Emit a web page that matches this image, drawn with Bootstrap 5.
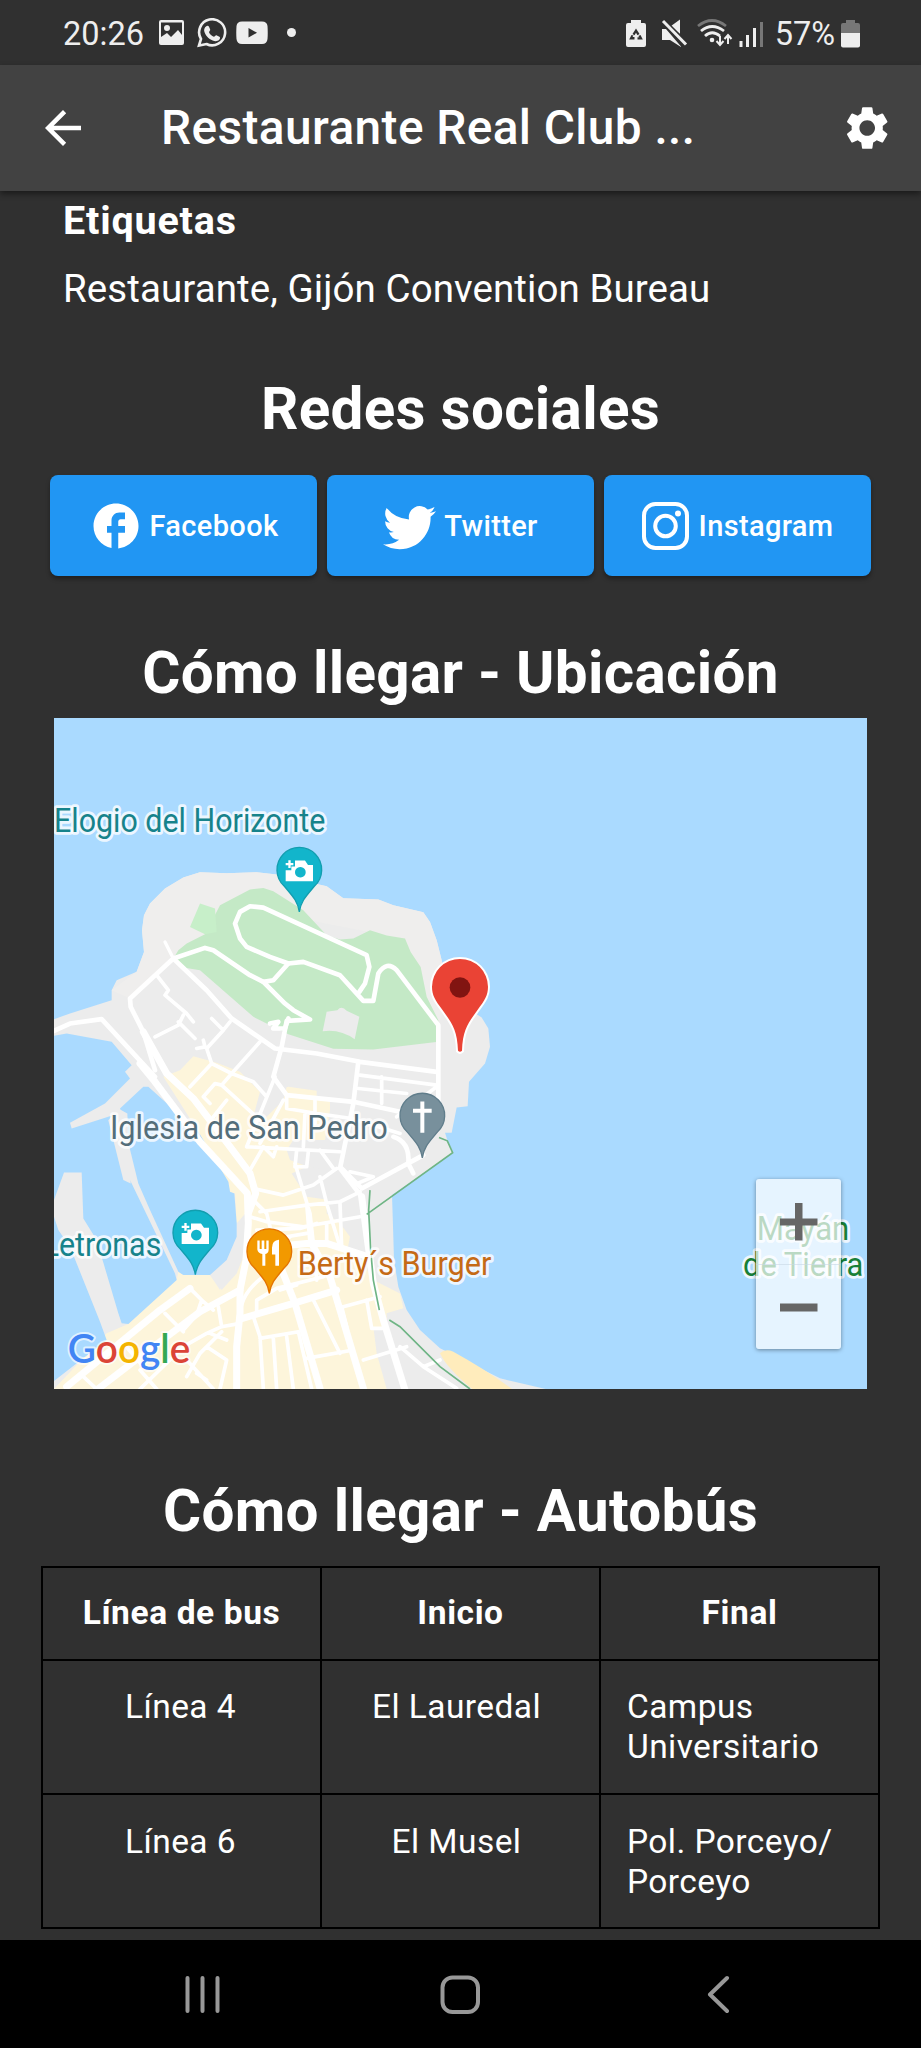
<!DOCTYPE html>
<html lang="es">
<head>
<meta charset="utf-8">
<meta name="viewport" content="width=device-width, initial-scale=1">
<title>Restaurante Real Club</title>
<link href="https://cdn.jsdelivr.net/npm/bootstrap@5.3.0/dist/css/bootstrap.min.css" rel="stylesheet">
<style>
body{background:#303030;color:#fff;font-family:Roboto,"Liberation Sans",sans-serif;height:2048px;overflow:hidden;font-size:33.5px;line-height:40px}
svg{display:block;flex:none}
.statusbar{height:65px;padding:3px 61px 0 63px;color:#eee;font-size:32.5px;line-height:62px}
.appbar{height:126px;background:#424242;padding:0 28px 0 36px;box-shadow:0 3px 6px rgba(0,0,0,.45);position:relative;z-index:1}
.appbar h1{font-size:47.8px;font-weight:500;line-height:56px;margin:-1px 0 0 71px;letter-spacing:.4px}
.tags{padding:7px 63px 0;height:184px}
.tags h2{font-size:39.5px;line-height:46px;font-weight:700;margin:0 0 22px;letter-spacing:.8px}
.tags p{font-size:38.5px;line-height:46px;margin:0;letter-spacing:.08px}
.heading{font-size:58.4px;line-height:68px;font-weight:700;text-align:center;margin:0;letter-spacing:.3px}
.socials{padding:32px 50px 63px;gap:10px}
.btn-social{flex:1 1 0;background:#2196f3!important;color:#fff!important;height:101px;border:0;border-radius:8px;font-size:29px;line-height:40px;font-weight:500;letter-spacing:.35px;box-shadow:0 3px 4px rgba(0,0,0,.35);padding:0}
.mapbox{width:813px;height:671px;margin:11px auto 88px 54px;position:relative;overflow:hidden;background:#aadaff}
.zoomer{right:26px;bottom:40px;width:85px;height:170px;border-radius:3px;background:rgba(255,255,255,.7);box-shadow:0 1px 4px rgba(0,0,0,.4)}
.zoomer button{height:85px;border:0;background:none;padding:0}
.zoomer button+button{border-top:1px solid rgba(200,215,228,.6)}
.buses{width:839px;margin:21px 0 0 41px;color:#fff;border-collapse:collapse;table-layout:fixed}
.buses th,.buses td{border:2px solid #000;padding:26px 26px;text-align:center;vertical-align:top;font-size:33.5px;line-height:40px;letter-spacing:.42px}
.buses th{padding:25px 26px 26px;letter-spacing:.6px}
.buses tr:last-child td{padding-top:27px;padding-bottom:25px}
.buses td:first-child{padding-right:28px}
.buses td:nth-child(2){padding-right:34px}
.buses td:last-child{text-align:left;padding-right:10px}
.sysnav{height:108px;background:#000;position:fixed;left:0;right:0;bottom:0;color:#989898}
</style>
</head>
<body>
<div class="statusbar d-flex align-items-center">
  <span>20:26</span>
  <svg width="145" height="32" viewBox="0 0 145 32" style="margin-left:14px" fill="#eee">
    <path fill-rule="evenodd" d="M3 2H24a2 2 0 0 1 2 2V25a2 2 0 0 1-2 2H3a2 2 0 0 1-2-2V4a2 2 0 0 1 2-2zM3 4.500V19L9 15L13 19L20 12L24 17V4.500zM9 7a3 3 0 1 1 0 6a3 3 0 0 1 0-6z"/>
    <path d="M41 27.500L43 21A13 13 0 1 1 48.500 26z" fill="none" stroke="#eee" stroke-width="2.600"/>
    <path d="M48 8.500c1-1.200 2.500-1 3 .2l1.200 2.800c.3.800-1.400 2.200-1.100 2.900 1 2 2.600 3.400 4.700 4.300.8.300 1.700-1.700 2.600-1.400l3 1.500c1 .6.700 2-.2 3-1.600 1.700-4 1.800-6.500.8-4-1.600-7.600-5.200-8.500-9.500-.3-1.900.5-3.600 1.800-4.600z"/>
    <path fill-rule="evenodd" d="M84 3.500H104Q109 3.500 109.500 8Q110 15 109.500 21Q109 26 104 26H84Q79 26 78.500 21Q78 15 78.500 8Q79 3.500 84 3.500zM90.500 10V19.500L99 14.700z"/>
    <circle cx="133.500" cy="14.500" r="4.500"/>
  </svg>
  <svg class="ms-auto" width="138" height="30" viewBox="0 0 138 30" fill="#eee" style="margin-right:11px">
    <path fill-rule="evenodd" d="M5 1H15V4H18Q20 4 20 6V26Q20 28 18 28H2Q0 28 0 26V6Q0 4 2 4H5zM10 9.500L6.500 15L8.500 16.300L10 13.800L11.500 16.300L13.500 15zM5.500 16L3.200 20.500H8.500V18H6.500L7.500 16.500zM14.500 16L12.300 17L13.300 18.300H11.500V20.500H16.800z"/>
    <path d="M36 10H40L55 27.500V28L44 21H36zM45 7L54 .5V15z"/>
    <path d="M37 2L60 25.500" stroke="#303030" stroke-width="6"/><path d="M37 2L60 25.500" stroke="#eee" stroke-width="3"/>
    <g fill="none" stroke-width="2.800"><path d="M72 7Q86-4 100 7" stroke="#777"/><path d="M75 12Q86 3 98 12M79 17Q86 10.500 94 17" stroke="#eee"/></g>
    <circle cx="86" cy="21" r="2.300"/>
    <path d="M94 17V26M90.500 22L94 26L97.500 22M102 25V16M98.500 20L102 16L105.500 20" fill="none" stroke="#eee" stroke-width="2"/>
    <path d="M113.500 22h3v6h-3zM120 16h3v12h-3zM127 9h3v19h-3z"/><path d="M134 3h3v25h-3z" fill="#777"/>
  </svg>
  <span>57%</span>
  <svg width="19" height="28" viewBox="0 0 19 28" style="margin-left:6px"><path fill="#777" d="M5 0H14V3H17Q19 3 19 5V13H0V5Q0 3 2 3H5z"/><path fill="#eee" d="M0 13H19V25.500Q19 27.500 17 27.500H2Q0 27.500 0 25.500z"/></svg>
</div>
<header class="appbar d-flex align-items-center">
  <svg width="54" height="54" viewBox="0 0 24 24" fill="#fff"><path d="M20 11H7.830l5.590-5.590L12 4l-8 8 8 8 1.410-1.410L7.830 13H20v-2z"/></svg>
  <h1>Restaurante Real Club ...</h1>
  <svg class="ms-auto" width="52" height="52" viewBox="0 0 24 24" fill="#fff"><path transform="translate(.1)" d="M19.140,12.940c0.040-0.300,0.060-0.610,0.060-0.940c0-0.320-0.020-0.640-0.070-0.940l2.030-1.580c0.180-0.140,0.230-0.410,0.120-0.610l-1.920-3.320c-0.120-0.220-0.370-0.290-0.590-0.220l-2.390,0.960c-0.500-0.380-1.030-0.700-1.620-0.940L14.400,2.810c-0.040-0.240-0.240-0.410-0.480-0.410h-3.840c-0.240,0-0.430,0.170-0.470,0.410L9.250,5.350C8.660,5.590,8.120,5.920,7.630,6.290L5.240,5.330c-0.220-0.080-0.470,0-0.590,0.220L2.740,8.870C2.620,9.080,2.660,9.340,2.860,9.480l2.030,1.580C4.840,11.360,4.800,11.690,4.800,12s0.020,0.640,0.070,0.940l-2.030,1.580c-0.180,0.140-0.230,0.410-0.120,0.610l1.920,3.320c0.120,0.220,0.370,0.290,0.590,0.220l2.390-0.960c0.500,0.380,1.030,0.700,1.620,0.940l0.360,2.540c0.050,0.240,0.240,0.410,0.480,0.410h3.840c0.240,0,0.440-0.170,0.470-0.410l0.360-2.540c0.590-0.240,1.130-0.560,1.620-0.940l2.390,0.960c0.220,0.080,0.470,0,0.590-0.220l1.920-3.320c0.120-0.220,0.070-0.470-0.120-0.610L19.140,12.940zM12,15.600c-1.980,0-3.600-1.620-3.600-3.600s1.620-3.600,3.600-3.600s3.600,1.620,3.600,3.600S13.980,15.600,12,15.600z"/></svg>
</header>
<section class="tags"><h2>Etiquetas</h2><p>Restaurante, Gijón Convention Bureau</p></section>
<h2 class="heading">Redes sociales</h2>
<div class="socials d-flex">
  <button class="btn btn-social d-flex align-items-center justify-content-center"><svg width="54" height="54" viewBox="0 0 24 24" fill="#fff" style="margin-right:7px"><path d="M22 12c0-5.520-4.480-10-10-10S2 6.480 2 12c0 4.840 3.440 8.870 8 9.800V15H8v-3h2V9.500C10 7.570 11.570 6 13.500 6H16v3h-2c-.55 0-1 .45-1 1v2h3v3h-3v6.950c5.050-.5 9-4.760 9-9.950z"/></svg>Facebook</button>
  <button class="btn btn-social d-flex align-items-center justify-content-center"><svg width="53" height="54" viewBox="0 0 16 16" fill="#fff" style="margin-right:8px"><path d="M5.026 15c6.038 0 9.341-5.003 9.341-9.334 0-.14 0-.282-.006-.422A6.685 6.685 0 0 0 16 3.542a6.658 6.658 0 0 1-1.889.518 3.301 3.301 0 0 0 1.447-1.817 6.533 6.533 0 0 1-2.087.793A3.286 3.286 0 0 0 7.875 6.030a9.325 9.325 0 0 1-6.767-3.429 3.289 3.289 0 0 0 1.018 4.382A3.323 3.323 0 0 1 .64 6.575v.045a3.288 3.288 0 0 0 2.632 3.218 3.203 3.203 0 0 1-.865.115 3.230 3.230 0 0 1-.614-.057 3.283 3.283 0 0 0 3.067 2.277A6.588 6.588 0 0 1 .78 13.580a6.320 6.320 0 0 1-.78-.045A9.344 9.344 0 0 0 5.026 15z"/></svg>Twitter</button>
  <button class="btn btn-social d-flex align-items-center justify-content-center"><svg width="47" height="48" viewBox="0 0 47 48" fill="none" stroke="#fff" stroke-width="4" style="margin-right:10px"><rect x="2" y="2" width="43" height="44" rx="11.500"/><circle cx="23.500" cy="24" r="10.300"/><circle cx="36" cy="11.500" r="3" fill="#fff" stroke="none"/></svg>Instagram</button>
</div>
<h2 class="heading">Cómo llegar - Ubicación</h2>
<div class="mapbox">
<svg width="813" height="671" viewBox="42 -187 2439 2014" preserveAspectRatio="none" font-family="Roboto,'Liberation Sans',sans-serif">
  <defs>
    <path id="pin" d="M0 127C-5 95-18 82-45 50A67 67 0 1 1 45 50C18 82 5 95 0 127z"/>
    <g id="camera" fill="#fff"><path fill-rule="evenodd" d="M-41 35V2H-24V-9H-13V-27H17L26-14H41V35zM3-8a16 16 0 1 0 .1 0z"/><path d="M-33-28h7v8h8v7h-8v8h-7v-8h-8v-7h8z"/></g>
  </defs>
  <!-- coast -->
  <path fill="#ececec" d="M42 717L90 700L215 660V630L230 600L290 575L312 515L306 450L312 405L330 370L375 325L430 292L480 276L560 279L650 276L710 283L780 300L860 318L910 354L1015 358L1060 375L1150 396L1170 425L1190 480L1205 540L1230 650L1325 712L1345 745L1350 800L1335 850L1287 905L1283 978L1250 982L1235 1058H1215L1222 1080L1240 1118L1056 1245L1060 1370L1062 1440L1075 1520L1100 1590L1140 1650L1200 1705L1290 1750L1380 1795L1530 1830H42z"/>
  <path fill="#efeeed" d="M306 450L312 405L330 370L375 325L430 292L480 276L560 279L650 276L710 283L780 300L860 318L910 354L1015 358L1060 375L1150 396L1170 425L1190 480L1205 540L1230 650L1195 730L1040 465L700 400L400 535L270 655L215 630L290 575L312 515z"/>
  <!-- built-up area -->
  <path fill="#fdf5db" d="M460 828L530 848L600 875L665 940L745 920L830 932L830 955H870V990L855 1080H760L740 1110L750 1140L830 1170L860 1260V1300L900 1330L930 1370L920 1420L975 1460L1000 1500L1080 1540L1090 1585L1040 1600L1040 1650L1000 1640L1010 1720L1040 1827H42L200 1660L265 1632L410 1500L415 1475L430 1485H510L540 1530L560 1470L620 1400L625 1300L590 1330L585 1240L570 1235L565 1205L475 1055L370 890L420 870z"/>
  <path fill="#ececec" d="M590 1330L625 1290L622 1400L590 1480L545 1530L510 1485L560 1440L590 1370zM660 935L705 880L740 920L730 960L650 1040L640 1010zM755 1180L800 1160L870 1170V1260L800 1250z"/>
  <path fill="#ffecbc" d="M1200 1720Q1215 1705 1240 1715Q1340 1770 1420 1830H1300Q1220 1765 1200 1720z"/>
  <!-- park -->
  <path fill="#c4e9c6" d="M400 535L415 510L440 490L495 462L540 375L630 328L670 323L700 333L790 390L860 465L900 478L940 475L990 450L1040 466L1095 475L1112 515L1142 560L1160 650L1195 720V785L1000 808L880 806L745 762L640 710L480 570L430 562z"/>
  <path fill="#c7efc9" d="M450 440L480 370L525 385L530 455L495 462z"/>
  <path fill="#ececec" d="M860 695L892 690Q905 675 920 692L958 710L944 777Q900 745 848 753z"/>
  <!-- harbour -->
  <g fill="#aadaff">
    <path d="M42 767L80 760L215 785L275 855L255 875L270 895L195 970L90 1028L95 1045L235 1000L270 1200L405 1480L410 1500L265 1632L245 1630L235 1600L170 1380L130 1315L125 1177H72L42 1260z"/>
    <path d="M325 920H310L240 985L295 1210L330 1290L415 1475L430 1485H510L560 1440L590 1370V1330L583 1240L570 1235L565 1205L475 1055z"/>
    <path d="M42 1310L55 1350L90 1400L180 1625L200 1680L42 1803z"/>
  </g>
  <path fill="#ececec" d="M235 985L262 1000L272 1210L250 1200L205 1020z"/>
  <!-- streets -->
  <g fill="none" stroke="#fff" stroke-linejoin="round" stroke-linecap="round">
    <g stroke-width="14">
      <path d="M42 752L90 730L185 717L345 890"/>
      <path d="M400 535L500 630L575 715L640 760L705 805L830 820L960 845L1190 875"/>
      <path d="M375 485L400 535" stroke-width="10"/>
      <path d="M400 535L270 655L272 680L310 755L345 870"/>
      <path d="M400 535L495 503L520 510L630 585L670 605L735 670L760 690L810 718L740 722L725 800L700 890L740 945L940 965L1080 995"/>
      <path d="M670 605L700 600L745 550L690 530L620 500L600 475L585 430L600 395L630 378L670 382L980 525L988 560L975 610L958 635"/>
      <path d="M745 550L790 545L900 585L970 662H1000L1015 580Q1040 540 1070 570L1195 735V1000"/>
      <path d="M955 845L940 970L900 1165L965 1250"/>
      <path d="M690 730L715 725L700 745L735 745L745 715"/>
      <path d="M1150 1125L965 1225L905 1165M1060 1070Q1110 1085 1105 1150L1120 1180"/>
    </g>
    <g stroke-width="21">
      <path d="M300 850L345 905L480 1085L622 1240L625 1330L618 1440L600 1530L480 1595L300 1730L170 1830"/>
      <path d="M310 755L380 880L460 955L540 1060L630 1180L647 1240L625 1300"/>
      <path d="M965 1250L985 1400L1000 1510L1030 1620L1095 1830"/>
      <path d="M450 1525L360 1590L80 1820"/>
      <path d="M600 1617L760 1570L890 1530"/>
      <path d="M710 1430L765 1570L840 1825M820 1400L870 1490L915 1640L970 1825"/>
      <path d="M700 1400L800 1390L860 1390L985 1430"/>
      <path d="M600 1530V1600L590 1700V1830"/>
    </g>
    <g stroke-width="11">
      <path d="M350 585L385 630L375 645L440 700L460 725M415 725L465 775M345 770L415 735L430 705M515 715L550 750L570 725M490 780L495 800L470 805M550 750L500 805L515 850L450 920M515 850L575 880L640 905L680 950M660 785L575 880L545 915L660 1020M545 915L525 910L490 950L510 970M560 960L520 1010M705 890L620 1100M730 960L660 1090M740 945V985L830 1000L935 1015L1080 1060M960 885L1190 915M955 925L1100 940M1025 890V970M1190 920L1070 1010M825 960V1030M620 1100L900 1115M795 1000L790 1100M770 1110L765 1160L800 1160L805 1115M765 1150L810 1300L820 1390M840 1110L880 1165M640 1225L730 1245L820 1215L890 1165M630 1170L670 1100L700 1130L710 1100M660 1295L800 1275L900 1265L960 1235M840 1190L860 1270L900 1400M930 1175L1000 1190L940 1215"/>
      <path d="M640 1260L680 1300L690 1340M630 1310L680 1325L790 1340L960 1310M650 1350L780 1345L830 1330M740 1370L800 1360M800 1270L810 1390M900 1270L905 1400M860 1330V1390M820 1400L830 1500M690 1400L750 1370"/>
      <path d="M375 1600L430 1655M450 1525L485 1560L470 1605L430 1650M485 1560L520 1590M535 1580L545 1640L600 1630M545 1640L500 1660L430 1700L300 1827M545 1655L480 1720L440 1790M560 1680L510 1660M250 1690L310 1760M300 1770L350 1827M130 1790L170 1827M440 1740L520 1827M500 1700L560 1740L540 1827M470 1780L500 1800M640 1610L660 1670L670 1827M660 1675L775 1655L815 1827M700 1675L710 1827M740 1670L760 1827M650 1600L650 1560L710 1525L850 1490M600 1610Q600 1540 670 1490M820 1560L900 1720M800 1735L940 1710M970 1740L1100 1700M910 1580L1020 1550M980 1560L995 1645H1040M905 1580L920 1640M1080 1700L1150 1760L1250 1825M1150 1760L1200 1740M720 1530L770 1515M780 1460L850 1440"/>
    </g>
  </g>
  <path d="M1197 1072L1222 1082L1238 1118L980 1303M990 1230L986 1290L992 1410L1000 1500L1018 1590M1048 1620L1080 1640L1200 1760L1290 1827" fill="none" stroke="#6fb585" stroke-width="5"/>
  <!-- places -->
  <g font-size="97" stroke="#fff" stroke-opacity=".8" stroke-width="17" stroke-linejoin="round" paint-order="stroke">
    <text x="42" y="155" fill="#17838b" textLength="814" lengthAdjust="spacingAndGlyphs">Elogio del Horizonte</text>
    <text x="210" y="1078" fill="#546e7a" textLength="833" lengthAdjust="spacingAndGlyphs">Iglesia de San Pedro</text>
    <text x="8" y="1427" fill="#17838b" textLength="356" lengthAdjust="spacingAndGlyphs">Letronas</text>
    <text x="773" y="1484" fill="#c56a16" textLength="581" lengthAdjust="spacingAndGlyphs">Berty´s Burger</text>
    <text x="2150" y="1379" fill="#188038" textLength="278" lengthAdjust="spacingAndGlyphs">Mayán</text>
    <text x="2109" y="1489" fill="#188038" textLength="361" lengthAdjust="spacingAndGlyphs">de Tierra</text>
  </g>
  <g stroke-width="4">
    <g transform="translate(778 268)"><use href="#pin" fill="#12b5cb" stroke="#129eaf"/><use href="#camera"/></g>
    <g transform="translate(466 1357)"><use href="#pin" fill="#12b5cb" stroke="#129eaf"/><use href="#camera"/></g>
    <g transform="translate(1147 1006)"><use href="#pin" fill="#78909c" stroke="#607d8b"/><path d="M-6-42H6V-20H28V-8H6V52H-6V-8H-28V-20H-6z" fill="#fff"/></g>
    <g transform="translate(688 1413)"><use href="#pin" fill="#f29900" stroke="#e37400"/><path d="M-36-32h7v26h6v-26h8v26h6v-26h7V-5Q-2 6-12 9V44H-21V9Q-34 6-36-5zM8 10V-10Q8-32 29-34V44H18V10z" fill="#fff"/></g>
  </g>
  <path d="M1254 812C1252 745 1232 725 1208 690C1185 660 1176 645 1176 620A84 84 0 1 1 1344 620C1344 645 1335 660 1312 690C1288 725 1268 745 1266 812Q1260 818 1254 812z" fill="#ea4335" stroke="#fff" stroke-width="12" paint-order="stroke"/>
  <circle cx="1260" cy="622" r="31" fill="#811411"/>
  <text x="83" y="1749" font-family="Lato,Roboto,sans-serif" font-weight="600" font-size="120" stroke="#fff" stroke-opacity=".65" stroke-width="12" stroke-linejoin="round" paint-order="stroke" textLength="368" lengthAdjust="spacingAndGlyphs"><tspan fill="#4285f4">G</tspan><tspan fill="#db4437">o</tspan><tspan fill="#f4b400">o</tspan><tspan fill="#4285f4">g</tspan><tspan fill="#34a853">l</tspan><tspan fill="#db4437">e</tspan></text>
</svg>
<div class="zoomer position-absolute d-flex flex-column">
  <button aria-label="Acercar"><svg width="85" height="85" viewBox="0 0 85 85"><path d="M39 24h7.500v15.500H61.500v7H46.500V61.500H39V46.500H24v-7H39z" fill="#666"/></svg></button>
  <button aria-label="Alejar"><svg width="85" height="85" viewBox="0 0 85 85"><path d="M24 38.500H61.500v8H24z" fill="#666"/></svg></button>
</div>
</div>
<h2 class="heading">Cómo llegar - Autobús</h2>
<table class="buses">
  <thead><tr><th>Línea de bus</th><th>Inicio</th><th>Final</th></tr></thead>
  <tbody>
    <tr><td>Línea 4</td><td>El Lauredal</td><td>Campus Universitario</td></tr>
    <tr><td>Línea 6</td><td>El Musel</td><td>Pol. Porceyo/ Porceyo</td></tr>
  </tbody>
</table>
<nav class="sysnav">
  <svg width="921" height="108" viewBox="0 0 921 108" fill="none" stroke="currentColor" stroke-width="4" stroke-linecap="round" stroke-linejoin="round"><path d="M187.500 38V71M202.500 38V71M217.500 38V71M727 38L710 54.500L727 71"/><rect x="442.500" y="37.500" width="35.500" height="34.500" rx="10"/></svg>
</nav>
<script src="https://cdn.jsdelivr.net/npm/bootstrap@5.3.0/dist/js/bootstrap.bundle.min.js"></script>
</body>
</html>
